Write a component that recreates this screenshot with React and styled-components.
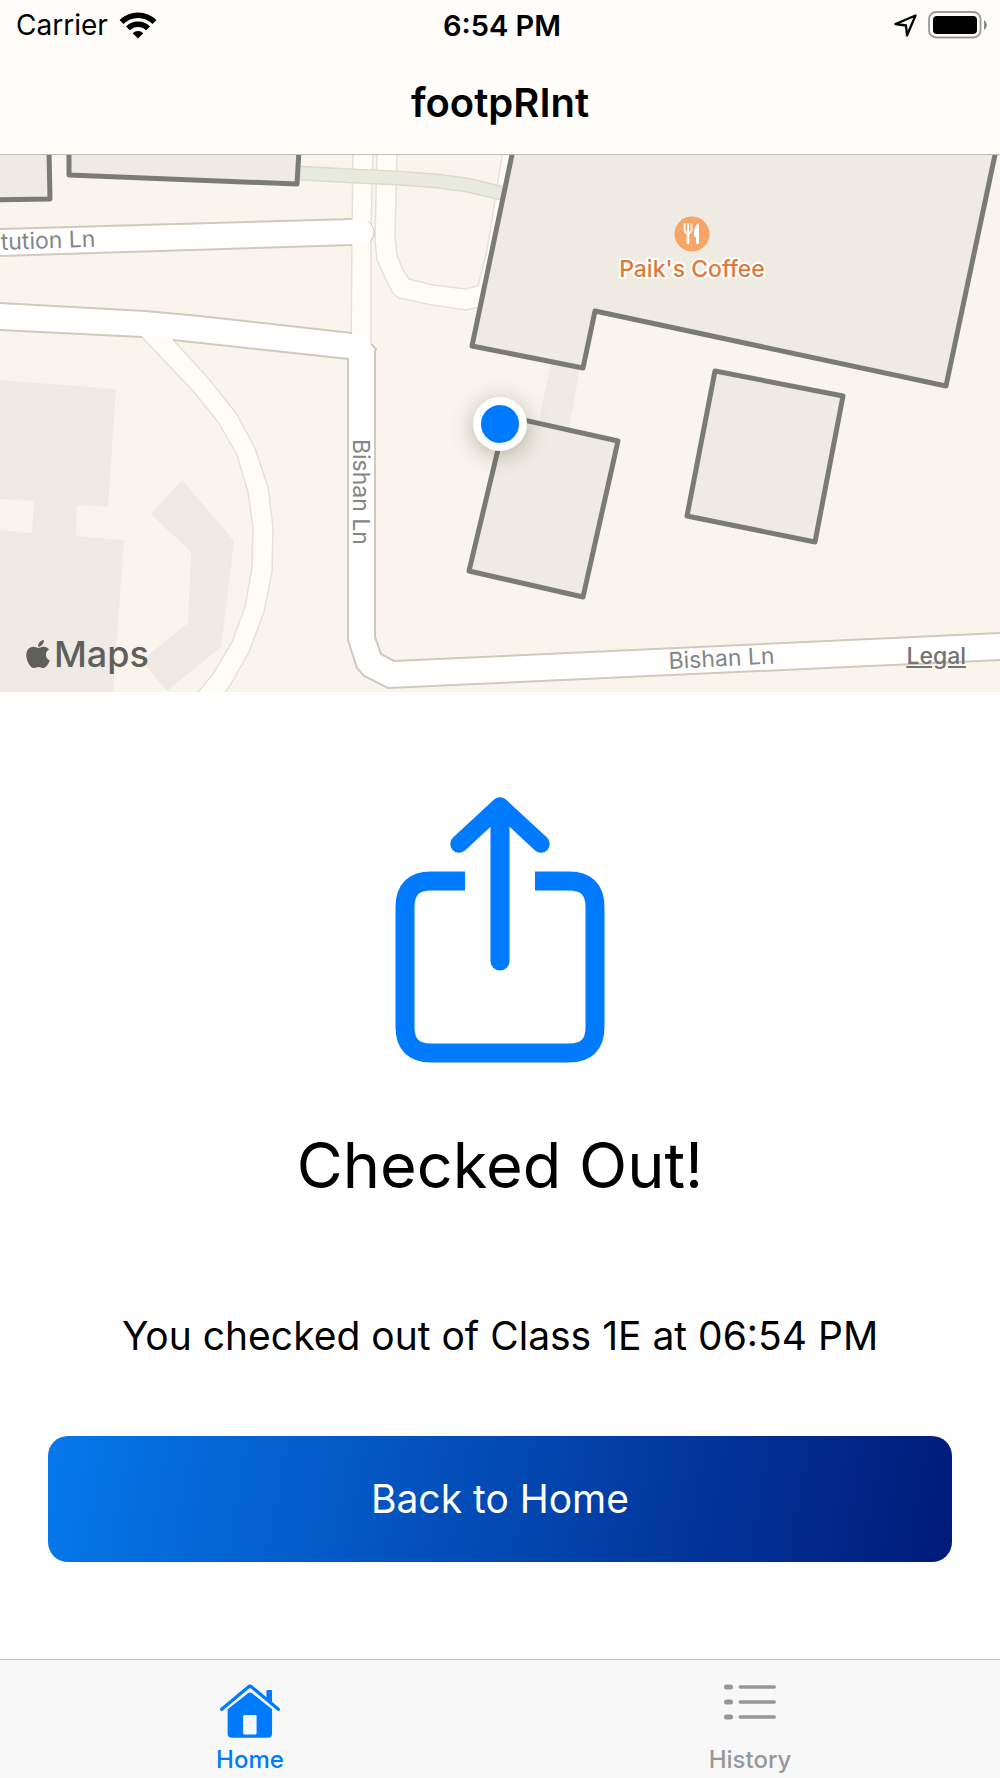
import React from 'react';
import styled, { createGlobalStyle } from 'styled-components';
import { FaApple } from 'react-icons/fa';

const buildings = [
  '-10,150 49,150 50,199 -10,200',
  '69,150 69,175 297,184 299,150',
  '513,150 472,346 583,368 595,311 946,386 996,150',
  '715,371 843,396 815,542 687,516',
  '506,416 618,441 583,597 469,571',
];

const blocks = [
  '0,380 116,389 108,507 77,505 76,536 124,540 113,692 0,692 0,530 32,533 34,501 0,499',
  '182,480 234,541 221,647 167,691 146,666 146,657 188,623 191,552 151,514',
  '551,361 580,368 569,428 539,421',
];

const StreetMap = () => (
  <MapDrawing viewBox="0 155 1000 537" role="img" aria-label="Map of Bishan Ln">
    {blocks.map((points) => (
      <polygon key={points} points={points} fill="#efebe4" />
    ))}

    {/* footpaths */}
    <g fill="#fffcf6" stroke="#e4e1d9" strokeWidth="1.5">
      <path d="M353 150 L352 240 L351 350 H371 L371 230 L373 150 Z" />
      <path d="M377 150 L375 240 L377 260 L385 278 L393 293 L399 298 L432 305 L466 310 L480 307 L500 290 L530 150 L503 150 L495 200 L487 250 L478 286 L466 289 L433 285 L409 279 L403 270 L397 255 L395 237 L397 150 Z" />
      <path d="M138 333 L194 392 L218 422 L237 455 L248 492 L253 528 L252 568 L245 607 L232 642 L213 674 L193 698 L221 698 L229 687 L249 652 L264 612 L272 572 L273 527 L268 487 L255 448 L236 413 L208 378 L169 335 Z" />
    </g>
    <path d="M298 173 L353 176 L397 178 L437 181 L467 185 L505 194" fill="none" stroke="#dcdbc9" strokeWidth="15" />
    <path d="M298 173 L353 176 L397 178 L437 181 L467 185 L505 194" fill="none" stroke="#e9eade" strokeWidth="12" />

    {/* roads */}
    <path d="M368 222 Q378 231 370 241" fill="none" stroke="#d3c8bc" strokeWidth="2" />
    <path d="M-10 243 L361 232" fill="none" stroke="#fff" strokeWidth="25" strokeLinecap="round" />
    <path d="M0 303 L145 311 L200 316 L352 332 Q362 333 368 340 L375 348 L375 637 L381 654 L394 661 L1000 633 V660 L388 688 L364 676 L357 668 L348 640 V359 L173 340 L142 337 L0 330 Z" fill="#fff" />
    <g fill="none" stroke="#d3c8bc" strokeWidth="2">
      <path d="M0 229 L352 219" />
      <path d="M0 256 L352 245" />
      <path d="M0 303 L145 311 L200 316 L352 333" />
      <path d="M371 344 L376 349 L375 351 V637 L381 654 L394 661 L1000 633" />
      <path d="M0 330 L142 337" />
      <path d="M173 340 L348 359 V640 L357 668 L364 676 L388 688 L1000 660" />
    </g>

    {buildings.map((points) => (
      <polygon key={points} points={points} fill="#efebe3" stroke="#7b7b75" strokeWidth="5" strokeLinejoin="round" />
    ))}

    <StreetName transform="translate(1 250) rotate(-2)">tution Ln</StreetName>
    <StreetName transform="translate(353 439) rotate(90)">Bishan Ln</StreetName>
    <StreetName transform="translate(669 669) rotate(-3)">Bishan Ln</StreetName>

    <circle cx="692" cy="234" r="17.5" fill="#f6a566" />
    <g fill="none" stroke="#fff" strokeWidth="1.8" strokeLinecap="round">
      <path d="M684.5 224 V230 Q684.5 233 688 233 Q691.5 233 691.5 230 V224 M688 224 V232" />
      <path d="M688 232 V243" strokeWidth="2.6" />
    </g>
    <path d="M699 223 C695 225 693.5 230 694 237 H696 V243 Q697.500 245.500 699 243 Z" fill="#fff" />
    <PlaceName x="692" y="277">Paik's Coffee</PlaceName>
  </MapDrawing>
);

const WifiIcon = () => (
  <svg width="38" height="27" viewBox="0 0 38 27" fill="none" stroke="#000" aria-hidden="true">
    <path d="M2.500 10 A23.300 23.300 0 0 1 35.500 10" strokeWidth="5.500" />
    <path d="M8.900 16.400 A14.300 14.300 0 0 1 29.100 16.400" strokeWidth="5.500" />
    <path d="M19 26.500 L13.700 21.200 A7.500 7.500 0 0 1 24.300 21.200 Z" fill="#000" stroke="none" />
  </svg>
);

const LocationIcon = () => (
  <svg width="23" height="23" viewBox="0 0 23 23" fill="none" stroke="#000" strokeWidth="2.300" strokeLinejoin="round" aria-hidden="true">
    <path d="M1.500 10 L21.500 1.500 L13 21.500 L12 11.500 Z" />
  </svg>
);

const BatteryIcon = () => (
  <svg width="60" height="28" viewBox="0 0 60 28" aria-hidden="true">
    <rect x="1" y="1" width="51.500" height="25.500" rx="7" fill="none" stroke="#999" strokeWidth="1.800" />
    <rect x="5" y="5" width="44" height="18" rx="4" fill="#000" />
    <path d="M56 9 Q59 11 59 14 Q59 17 56 19 Z" fill="#888" />
  </svg>
);

const ShareIcon = () => (
  <svg width="210" height="267" viewBox="0 0 210 267" fill="none" stroke="#007aff" strokeWidth="19" aria-hidden="true">
    <path d="M70 85 H36 Q10 85 10 111 V231 Q10 257 36 257 H174 Q200 257 200 231 V111 Q200 85 174 85 H140" />
    <path d="M105 12 V165" strokeLinecap="round" />
    <path d="M64 48 L105 10 L146 48" strokeWidth="17.500" strokeLinecap="round" strokeLinejoin="round" />
  </svg>
);

const HomeIcon = () => (
  <svg width="60" height="54" viewBox="117 130 182 164" aria-hidden="true">
    <path d="M258 152 Q258 148 262 148 H271 Q275 148 275 152 V192 L258 178 Z" fill="#007aff" />
    <path d="M122 207 L203 139 Q208 135 213 139 L294 207" fill="none" stroke="#007aff" strokeWidth="10" strokeLinecap="round" />
    <path d="M140 207 L202 158 Q208 154 214 158 L275 207 V280 Q275 293 262 293 H153 Q140 293 140 280 Z" fill="#007aff" />
    <rect x="187" y="224" width="41" height="59" rx="4" fill="#f8f8f8" />
  </svg>
);

const ListIcon = () => (
  <svg width="52" height="36" viewBox="0 0 52 36" fill="#979797" aria-hidden="true">
    {[3, 18, 33].map((y) => (
      <g key={y}>
        <rect x="0" y={y - 2.5} width="9" height="5" rx="2.500" />
        <rect x="14.500" y={y - 1.8} width="37.500" height="3.600" rx="1.800" />
      </g>
    ))}
  </svg>
);

const App = () => {
  return (
    <Screen>
      <GlobalStyle />
      <Header>
        <StatusBar>
          <StatusGroup>
            <span>Carrier</span>
            <WifiIcon />
          </StatusGroup>
          <Clock>6:54 PM</Clock>
          <StatusGroup $end>
            <LocationIcon />
            <BatteryIcon />
          </StatusGroup>
        </StatusBar>
        <Title>footpRInt</Title>
      </Header>

      <MapView>
        <StreetMap />
        <UserDot />
        <MapsLogo>
          <FaApple size={32} aria-hidden="true" />
          Maps
        </MapsLogo>
        <LegalLink href="#legal">Legal</LegalLink>
      </MapView>

      <Content>
        <ShareIcon />
        <Heading>Checked Out!</Heading>
        <Message>You checked out of Class 1E at 06:54 PM</Message>
        <BackButton type="button">Back to Home</BackButton>
      </Content>

      <TabBar>
        <Tab href="#home" aria-current="page" $active>
          <TabIcon>
            <HomeIcon />
          </TabIcon>
          Home
        </Tab>
        <Tab href="#history">
          <TabIcon>
            <ListIcon />
          </TabIcon>
          History
        </Tab>
      </TabBar>
    </Screen>
  );
};

const GlobalStyle = createGlobalStyle`
  * {
    box-sizing: border-box;
  }

  body {
    margin: 0;
    background: #fff;
    color: #000;
    font-family: Inter, "Liberation Sans", sans-serif;
  }
`;

const Screen = styled.div`
  min-height: 100vh;
  display: flex;
  flex-direction: column;
`;

const Header = styled.header`
  background: #fefdfa;
  border-bottom: 1px solid #bebdb9;
  padding-bottom: 27px;
`;

const StatusBar = styled.div`
  display: grid;
  grid-template-columns: 1fr auto 1fr;
  align-items: center;
  height: 50px;
  padding: 0 12px 0 16px;
  font-size: 28px;
`;

const StatusGroup = styled.div`
  display: flex;
  align-items: center;
  justify-content: ${(props) => (props.$end ? 'flex-end' : 'flex-start')};
  gap: 11px;
`;

const Clock = styled.time`
  font-size: 29px;
  font-weight: 600;
`;

const Title = styled.h1`
  margin: 29px 0 0;
  font-size: 40px;
  line-height: 48px;
  font-weight: 600;
  text-align: center;
`;

const MapView = styled.section`
  position: relative;
  background: #f9f5ed;
`;

const MapDrawing = styled.svg`
  display: block;
  width: 100%;
  height: auto;
`;

const StreetName = styled.text`
  fill: #858585;
  font-size: 23px;
`;

const PlaceName = styled.text`
  fill: #dc7a3b;
  stroke: #fff;
  stroke-width: 4px;
  stroke-linejoin: round;
  paint-order: stroke;
  font-size: 23px;
  font-weight: 500;
  text-anchor: middle;
`;

const UserDot = styled.div`
  position: absolute;
  top: 50%;
  left: 50%;
  width: 54px;
  height: 54px;
  border: 8px solid #fff;
  border-radius: 50%;
  background: #007aff;
  box-shadow: 0 4px 22px rgba(60, 60, 30, 0.35);
  transform: translate(-50%, -50%);
`;

const MapsLogo = styled.div`
  position: absolute;
  left: 22px;
  bottom: 14px;
  display: flex;
  align-items: center;
  color: #5f5f5b;
  font-size: 36px;
  line-height: 48px;
  font-weight: 500;
`;

const LegalLink = styled.a`
  position: absolute;
  right: 34px;
  bottom: 20px;
  color: #737371;
  font-size: 23px;
  line-height: 32px;
  font-weight: 500;
`;

const Content = styled.main`
  flex: 1;
  display: flex;
  flex-direction: column;
  align-items: center;
  padding: 104px 48px 96px;
`;

const Heading = styled.h2`
  margin: 62px 0 0;
  font-size: 63px;
  line-height: 80px;
  font-weight: 400;
  text-align: center;
`;

const Message = styled.p`
  margin: 107px 0 0;
  font-size: 39px;
  line-height: 48px;
  text-align: center;
`;

const BackButton = styled.button`
  width: 100%;
  margin-top: 76px;
  padding: 39px;
  border: 0;
  border-radius: 20px;
  background: linear-gradient(100deg, #0578eb, #0349b3 50%, #001a78);
  color: #fff;
  font-family: inherit;
  font-size: 39px;
  line-height: 48px;
  cursor: pointer;
`;

const TabBar = styled.nav`
  display: flex;
  height: 119px;
  border-top: 1px solid #bcbcbc;
  background: #f8f8f8;
`;

const Tab = styled.a`
  flex: 1;
  display: flex;
  flex-direction: column;
  align-items: center;
  padding-top: 24px;
  color: ${(props) => (props.$active ? '#007aff' : '#979797')};
  font-size: 24px;
  line-height: 32px;
  font-weight: 500;
  text-decoration: none;
`;

const TabIcon = styled.span`
  height: 60px;
  line-height: 0;
`;

export default App;
